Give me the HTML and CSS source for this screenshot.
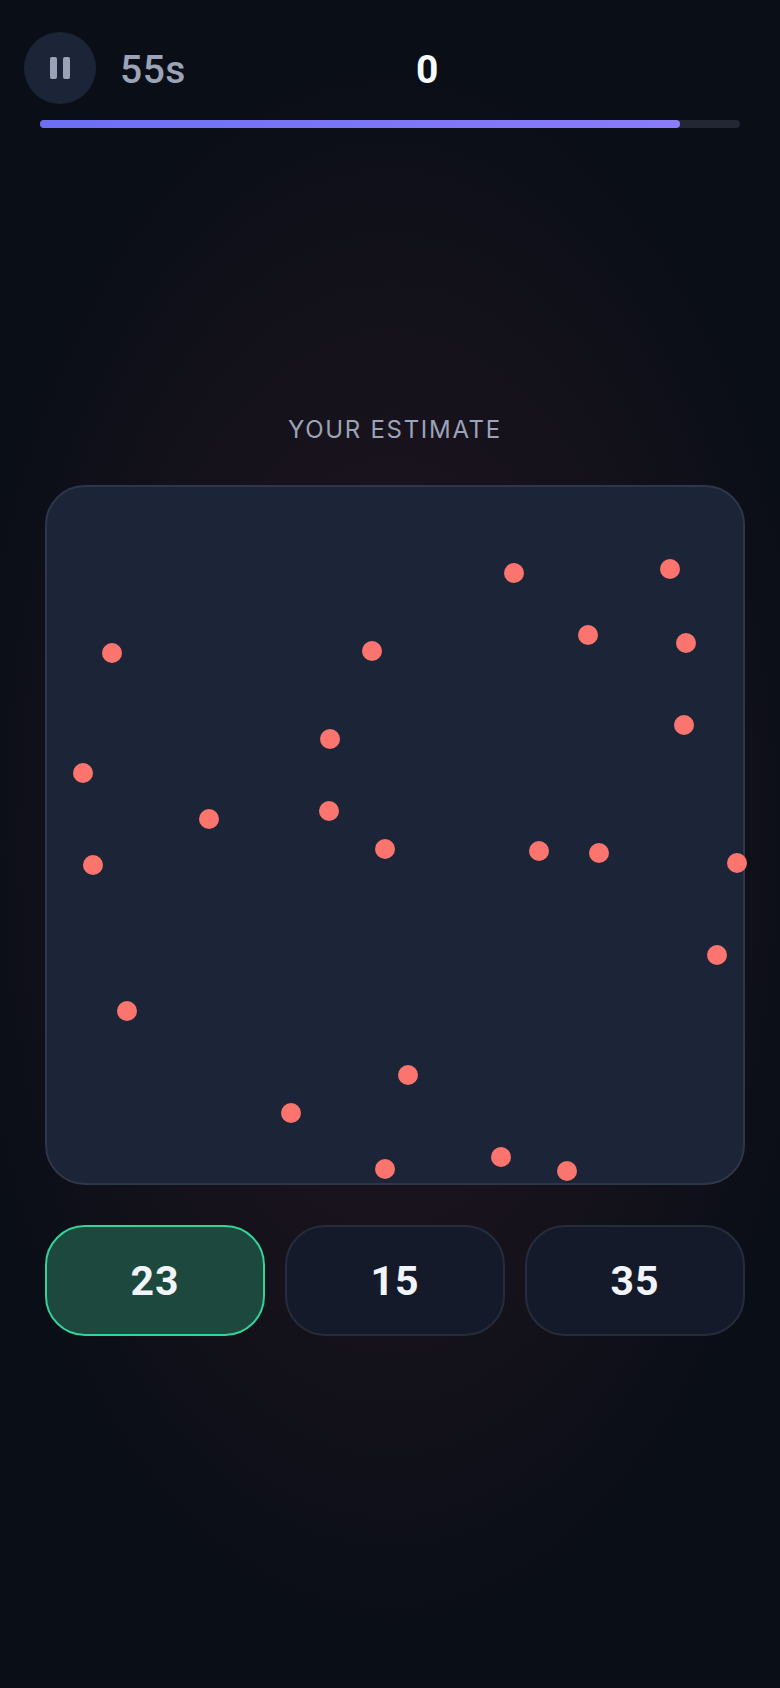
FILE: index.html
```html
<!DOCTYPE html>
<html lang="en">
<head>
<meta charset="utf-8">
<title>Your estimate</title>
<link rel="stylesheet" href="styles.css">
</head>
<body>
<main class="screen">
  <header class="top">
    <div class="stats">
      <button class="pause" aria-label="Pause"><span class="bar"></span><span class="bar"></span></button>
      <span class="time">55s</span>
      <span class="score">0</span>
    </div>
    <div class="track"><div class="fill"></div></div>
  </header>
  <section class="game">
    <h1 class="label">YOUR ESTIMATE</h1>
    <div class="field">
      <span class="dot" style="left:457px;top:76px"></span>
      <span class="dot" style="left:613px;top:72px"></span>
      <span class="dot" style="left:55px;top:156px"></span>
      <span class="dot" style="left:315px;top:154px"></span>
      <span class="dot" style="left:531px;top:138px"></span>
      <span class="dot" style="left:629px;top:146px"></span>
      <span class="dot" style="left:627px;top:228px"></span>
      <span class="dot" style="left:273px;top:242px"></span>
      <span class="dot" style="left:26px;top:276px"></span>
      <span class="dot" style="left:152px;top:322px"></span>
      <span class="dot" style="left:272px;top:314px"></span>
      <span class="dot" style="left:328px;top:352px"></span>
      <span class="dot" style="left:482px;top:354px"></span>
      <span class="dot" style="left:542px;top:356px"></span>
      <span class="dot" style="left:680px;top:366px"></span>
      <span class="dot" style="left:36px;top:368px"></span>
      <span class="dot" style="left:660px;top:458px"></span>
      <span class="dot" style="left:70px;top:514px"></span>
      <span class="dot" style="left:351px;top:578px"></span>
      <span class="dot" style="left:234px;top:616px"></span>
      <span class="dot" style="left:328px;top:672px"></span>
      <span class="dot" style="left:444px;top:660px"></span>
      <span class="dot" style="left:510px;top:674px"></span>
    </div>
    <div class="options">
      <button class="option selected">23</button>
      <button class="option">15</button>
      <button class="option">35</button>
    </div>
  </section>
</main>
</body>
</html>
```
FILE: styles.css
```css
* { box-sizing: border-box; }
html, body { margin: 0; height: 100%; }
body {
  background: #0a0e17;
  font-family: Inter, "Noto Sans", sans-serif;
  color: #f1f5f9;
}
.screen {
  width: 780px;
  height: 1688px;
  overflow: hidden;
  display: flex;
  flex-direction: column;
  background: radial-gradient(ellipse 440px 800px at 390px 844px, #22141f 0%, #1a131d 40%, #12111a 72%, #0a0e17 100%);
}
.top { padding: 32px 40px 0 24px; }
.stats {
  display: flex;
  align-items: center;
  position: relative;
  height: 72px;
}
.pause {
  width: 72px;
  height: 72px;
  border: 0;
  padding: 0;
  border-radius: 50%;
  background: #1c2537;
  display: flex;
  align-items: center;
  justify-content: center;
  gap: 6px;
}
.bar {
  width: 7px;
  height: 22px;
  border-radius: 2px;
  background: #9ca3b8;
}
.time {
  margin: 4px 0 0 24px;
  font-family: Roboto, Inter, sans-serif;
  font-size: 39px;
  font-weight: 500;
  letter-spacing: 0.5px;
  color: #9ca3b8;
}
.score {
  position: absolute;
  left: 392px;
  top: 15px;
  font-family: Roboto, Inter, sans-serif;
  font-size: 39px;
  font-weight: 700;
  color: #f8fafc;
}
.track {
  margin: 16px 0 0 16px;
  height: 8px;
  border-radius: 4px;
  background: #222733;
}
.fill {
  width: 640px;
  height: 8px;
  border-radius: 4px;
  background: linear-gradient(90deg, #6c6ff4, #8a7cfa);
}
.game {
  padding: 0 35px 0 45px;
  display: flex;
  flex-direction: column;
}
.label {
  margin: 287px 0 41px;
  font-size: 24px;
  line-height: 29px;
  font-weight: 400;
  letter-spacing: 1.7px;
  text-align: center;
  color: #9ca3b8;
}
.field {
  position: relative;
  width: 700px;
  height: 700px;
  background: #1c2537;
  border: 2px solid #2e3749;
  border-radius: 40px;
}
.dot {
  position: absolute;
  width: 20px;
  height: 20px;
  border-radius: 50%;
  background: #fc746e;
}
.options {
  margin-top: 40px;
  display: flex;
  gap: 20px;
  width: 700px;
}
.option {
  flex: 1;
  height: 111px;
  border: 2px solid #252c3c;
  border-radius: 40px;
  background: #141a29;
  color: #f1f5f9;
  font-family: Roboto, Inter, sans-serif;
  font-size: 41px;
  font-weight: 700;
  letter-spacing: 1px;
}
.selected {
  border-color: #34d399;
  background: #1c483e;
}
```
